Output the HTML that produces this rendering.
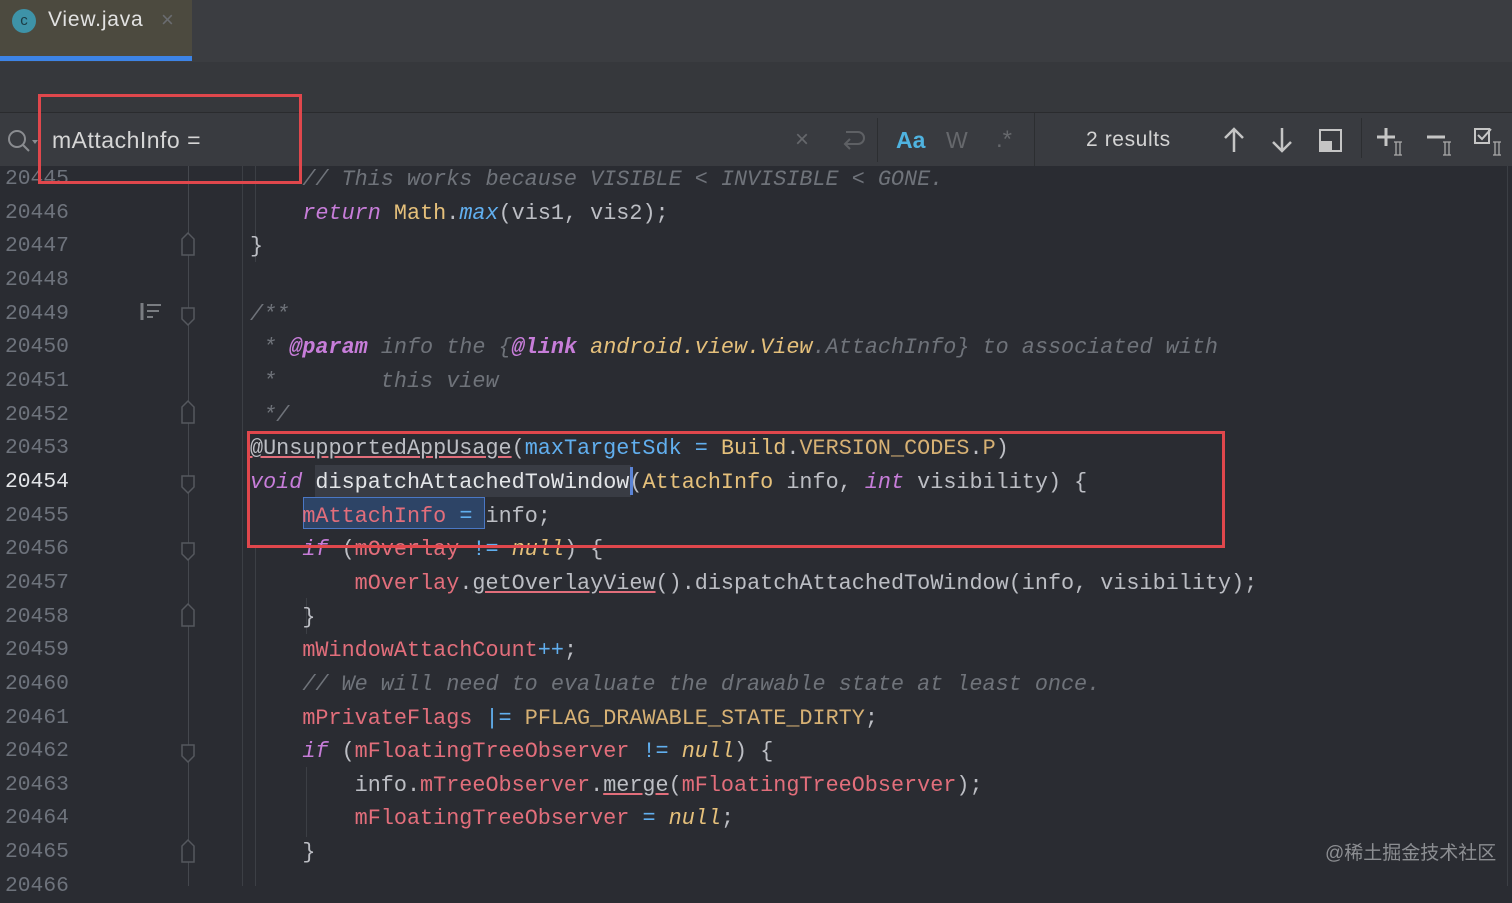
<!DOCTYPE html>
<html><head><meta charset="utf-8"><style>
*{margin:0;padding:0;box-sizing:border-box}
body{width:1512px;height:886px;overflow:hidden;background:#2a2c32;font-family:"Liberation Sans",sans-serif;position:relative}
.abs{position:absolute}
.code{position:absolute;left:250px;top:163px;font-family:"Liberation Mono",monospace;font-size:21.8px;line-height:33.65px;color:#bcbec4;white-space:pre}
.ln{position:absolute;left:5px;top:163px;font-family:"Liberation Mono",monospace;font-size:21.3px;line-height:33.65px;color:#6e737c;white-space:pre}
.c{color:#6f737a;font-style:italic}
.k{color:#c77dd9;font-style:italic}
.y{color:#e5c07b}
.yi{color:#e5c07b;font-style:italic}
.b{color:#61afef}
.bi{color:#61afef;font-style:italic}
.r{color:#e26e7b}
.t{color:#d7b174}
.u{text-decoration:underline;text-decoration-color:#e26e7b}
.w{color:#e3e5e8}
</style></head><body>
<div class="abs" style="left:0;top:0;width:1512px;height:62px;background:#3b3d41"></div>
<div class="abs" style="left:0;top:0;width:192px;height:56px;background:#4c4a3f"></div>
<div class="abs" style="left:0;top:56px;width:192px;height:5px;background:#3d84e6"></div>
<div class="abs" style="left:12px;top:9px;width:24px;height:24px;border-radius:50%;background:#3e93a8;color:#1c3b44;font-size:15px;text-align:center;line-height:23px">c</div>
<div class="abs" style="left:48px;top:8px;font-size:21px;letter-spacing:0.8px;color:#e2e2e2">View.java</div>
<div class="abs" style="left:161px;top:7px;font-size:22px;color:#6a6c70">×</div>
<div class="abs" style="left:0;top:62px;width:1512px;height:50px;background:#36383c"></div>
<div class="abs" style="left:0;top:112px;width:1512px;height:1px;background:#2a2b2e"></div>
<div class="abs" style="left:0;top:113px;width:1512px;height:53px;background:#393b40"></div>
<svg class="abs" style="left:6px;top:128px" width="32" height="26"><circle cx="11" cy="11" r="8" fill="none" stroke="#8a8c90" stroke-width="2"/><line x1="17" y1="17" x2="23" y2="23" stroke="#8a8c90" stroke-width="2"/><path d="M26 12 L32 12 L29 16Z" fill="#8a8c90"/></svg>
<div class="abs" style="left:52px;top:127px;font-size:23px;letter-spacing:0.5px;color:#d6d6d6">mAttachInfo =</div>
<div class="abs" style="left:795px;top:126px;font-size:24px;color:#66686c">×</div>
<svg class="abs" style="left:840px;top:128px" width="26" height="26"><path d="M6 4 H18 A5 5 0 0 1 18 16 H6 M10 11 L5 16 L10 21" fill="none" stroke="#5e6064" stroke-width="2"/></svg>
<div class="abs" style="left:877px;top:118px;width:1px;height:44px;background:#2c2e31"></div>
<div class="abs" style="left:896px;top:127px;font-size:23px;color:#4fb3e0;font-weight:bold">Aa</div>
<div class="abs" style="left:946px;top:127px;font-size:23px;color:#66686c">W</div>
<div class="abs" style="left:996px;top:126px;font-size:24px;color:#66686c">.*</div>
<div class="abs" style="left:1034px;top:113px;width:1px;height:53px;background:#2c2e31"></div>
<div class="abs" style="left:1086px;top:128px;font-size:21px;letter-spacing:0.6px;color:#d3d3d3">2 results</div>
<svg class="abs" style="left:1222px;top:126px" width="24" height="28"><path d="M12 3 V26 M3 12 L12 3 L21 12" fill="none" stroke="#c5c5c5" stroke-width="2.5"/></svg>
<svg class="abs" style="left:1270px;top:126px" width="24" height="28"><path d="M12 2 V25 M3 16 L12 25 L21 16" fill="none" stroke="#c5c5c5" stroke-width="2.5"/></svg>
<svg class="abs" style="left:1318px;top:128px" width="26" height="26"><rect x="2" y="2" width="21" height="21" fill="none" stroke="#c5c5c5" stroke-width="2"/><rect x="3" y="13" width="11" height="9" fill="#c5c5c5"/></svg>
<div class="abs" style="left:1361px;top:118px;width:1px;height:40px;background:#2c2e31"></div>
<svg class="abs" style="left:1376px;top:126px" width="34" height="30"><path d="M10 2 V20 M1 11 H19" stroke="#c5c5c5" stroke-width="3"/><path d="M20 16 V29 M24 16 V29 M18 16 H26 M18 29 H26" stroke="#aaa" stroke-width="1.3" fill="none"/></svg>
<svg class="abs" style="left:1425px;top:126px" width="34" height="30"><path d="M2 11 H20" stroke="#c5c5c5" stroke-width="3"/><path d="M20 16 V29 M24 16 V29 M18 16 H26 M18 29 H26" stroke="#aaa" stroke-width="1.3" fill="none"/></svg>
<svg class="abs" style="left:1473px;top:126px" width="34" height="30"><rect x="2" y="3" width="14" height="14" fill="none" stroke="#c5c5c5" stroke-width="2"/><path d="M5 9 L9 13 L18 3" fill="none" stroke="#c5c5c5" stroke-width="2"/><path d="M22 16 V29 M26 16 V29 M20 16 H28 M20 29 H28" stroke="#aaa" stroke-width="1.3" fill="none"/></svg>
<div class="abs" style="left:188px;top:166px;width:1px;height:720px;background:#45484e"></div>
<div class="abs" style="left:242px;top:166px;width:1px;height:720px;background:#3c3f45"></div>
<div class="abs" style="left:255px;top:166px;width:1px;height:96px;background:#3c3f45"></div>
<div class="abs" style="left:255px;top:545px;width:1px;height:341px;background:#3c3f45"></div>
<div class="abs" style="left:306px;top:598px;width:1px;height:36px;background:#3c3f45"></div>
<div class="abs" style="left:306px;top:767px;width:1px;height:70px;background:#3c3f45"></div>
<div class="abs" style="left:1507px;top:166px;width:1px;height:720px;background:#3c3f45"></div>
<svg class="abs" style="left:180px;top:166px" width="18" height="720">
<g fill="#2a2c32" stroke="#55585e" stroke-width="1.5">
<path d="M2 73 L8 67 L14 73 V89 H2Z"/>
<path d="M2 142 H14 V153 L8 159 L2 153Z"/>
<path d="M2 241 L8 235 L14 241 V257 H2Z"/>
<path d="M2 310 H14 V321 L8 327 L2 321Z"/>
<path d="M2 377 H14 V388 L8 394 L2 388Z"/>
<path d="M2 444 L8 438 L14 444 V460 H2Z"/>
<path d="M2 579 H14 V590 L8 596 L2 590Z"/>
<path d="M2 680 L8 674 L14 680 V696 H2Z"/>
</g></svg>
<svg class="abs" style="left:140px;top:302px" width="24" height="20"><path d="M2 1 V18" stroke="#7a7d82" stroke-width="3"/><path d="M7 3 H21 M7 9 H19 M7 15 H13" stroke="#7a7d82" stroke-width="2"/></svg>
<div class="abs" style="left:315px;top:465px;width:316px;height:32px;background:#393c44"></div>
<div class="abs" style="left:630px;top:467px;width:3px;height:28px;background:#5b84d6"></div>
<div class="abs" style="left:303px;top:497px;width:182px;height:32px;background:#2d4466;border:1.5px solid #4a77c4"></div>
<div class="ln">20445
20446
20447
20448
20449
20450
20451
20452
20453
<span class="w">20454</span>
20455
20456
20457
20458
20459
20460
20461
20462
20463
20464
20465
20466</div>
<div class="code"><span class="c">    // This works because VISIBLE &lt; INVISIBLE &lt; GONE.</span>
    <span class="k">return</span> <span class="y">Math</span>.<span class="bi">max</span>(vis1, vis2);
}

<span class="c">/**</span>
<span class="c"> * </span><span class="k" style="font-weight:bold">@param</span><span class="c"> info the {</span><span class="k" style="font-weight:bold">@link</span> <span class="yi">android.view.View</span><span class="c">.AttachInfo} to associated with</span>
<span class="c"> *        this view</span>
<span class="c"> */</span>
<span class="u">@UnsupportedAppUsage</span>(<span class="b">maxTargetSdk</span> <span class="b">=</span> <span class="y">Build</span>.<span class="t">VERSION_CODES</span>.<span class="t">P</span>)
<span class="k">void</span> <span class="w">dispatchAttachedToWindow</span>(<span class="y">AttachInfo</span> info, <span class="k">int</span> visibility) {
    <span class="r">mAttachInfo</span> <span class="b">=</span> info;
    <span class="k">if</span> (<span class="r">mOverlay</span> <span class="b">!=</span> <span class="yi">null</span>) {
        <span class="r">mOverlay</span>.<span class="u">getOverlayView</span>().dispatchAttachedToWindow(info, visibility);
    }
    <span class="r">mWindowAttachCount</span><span class="b">++</span>;
<span class="c">    // We will need to evaluate the drawable state at least once.</span>
    <span class="r">mPrivateFlags</span> <span class="b">|=</span> <span class="t">PFLAG_DRAWABLE_STATE_DIRTY</span>;
    <span class="k">if</span> (<span class="r">mFloatingTreeObserver</span> <span class="b">!=</span> <span class="yi">null</span>) {
        info.<span class="r">mTreeObserver</span>.<span class="u">merge</span>(<span class="r">mFloatingTreeObserver</span>);
        <span class="r">mFloatingTreeObserver</span> <span class="b">=</span> <span class="yi">null</span>;
    }</div>
<div class="abs" style="left:38px;top:94px;width:264px;height:90px;border:3px solid #e0474c"></div>
<div class="abs" style="left:247px;top:431px;width:978px;height:117px;border:3px solid #e0474c"></div>
<div class="abs" style="left:1325px;top:838px;font-family:'Liberation Sans','Noto Sans CJK SC',sans-serif;font-size:19px;color:#8c8e92">@稀土掘金技术社区</div>
</body></html>
